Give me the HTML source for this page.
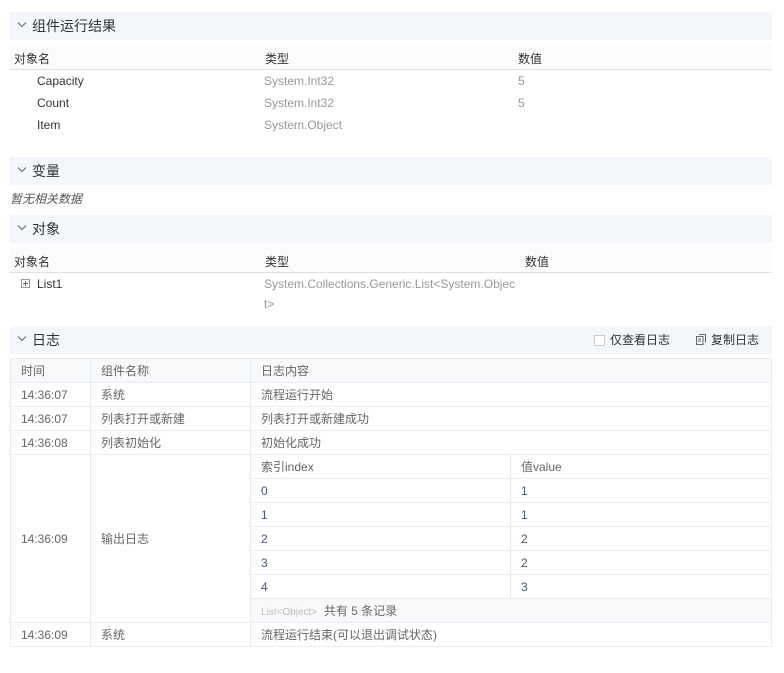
<!DOCTYPE html>
<html><head><meta charset="utf-8"><style>
*{margin:0;padding:0;box-sizing:border-box}
body{width:784px;height:673px;background:#fff;font-family:"Liberation Sans","Noto Sans CJK SC",sans-serif;font-size:12px;color:#333;position:relative;overflow:hidden}
.a{position:absolute;white-space:nowrap}
.hd{position:absolute;left:10px;width:762px;height:28px;background:#f3f6fa;font-size:14px;color:#333;line-height:28px;padding-left:22px}
.hd svg.chev{position:absolute;left:7px;top:10px}
.th{position:absolute;left:10px;width:762px;height:26px;background:#fafbfc;border-bottom:1px solid #dde0e5}
.g{color:#999}
table{position:absolute;border-collapse:collapse;left:10px;top:358px;width:762px;font-size:12px;color:#666}
td{border:1px solid #e8ebf0;height:24px;padding:0 10px;vertical-align:middle}
.lh td{background:#f8f9fa}
.in td{color:#4a5570}
</style></head><body>
<div class="hd" style="top:12px"><svg class="chev" width="10" height="6" viewBox="0 0 10 6"><path d="M1 .5L5 4.5 9 .5" fill="none" stroke="#666" stroke-width="1"/></svg>组件运行结果</div>
<div class="th" style="top:44px"></div>
<div class="a" style="left:14px;top:50px">对象名</div>
<div class="a" style="left:265px;top:50px">类型</div>
<div class="a" style="left:518px;top:50px">数值</div>
<div class="a" style="left:37px;top:74px">Capacity</div><div class="a g" style="left:264px;top:74px">System.Int32</div><div class="a g" style="left:518px;top:74px">5</div>
<div class="a" style="left:37px;top:96px">Count</div><div class="a g" style="left:264px;top:96px">System.Int32</div><div class="a g" style="left:518px;top:96px">5</div>
<div class="a" style="left:37px;top:118px">Item</div><div class="a g" style="left:264px;top:118px">System.Object</div>

<div class="hd" style="top:157px"><svg class="chev" width="10" height="6" viewBox="0 0 10 6"><path d="M1 .5L5 4.5 9 .5" fill="none" stroke="#666" stroke-width="1"/></svg>变量</div>
<div class="a" style="left:10px;top:190px;font-style:italic;color:#555">暂无相关数据</div>

<div class="hd" style="top:215px"><svg class="chev" width="10" height="6" viewBox="0 0 10 6"><path d="M1 .5L5 4.5 9 .5" fill="none" stroke="#666" stroke-width="1"/></svg>对象</div>
<div class="th" style="top:247px"></div>
<div class="a" style="left:14px;top:253px">对象名</div>
<div class="a" style="left:265px;top:253px">类型</div>
<div class="a" style="left:525px;top:253px">数值</div>
<svg class="a" style="left:21px;top:279px" width="9" height="9" viewBox="0 0 9 9"><rect x=".5" y=".5" width="8" height="8" fill="none" stroke="#999"/><path d="M2 4.5h5M4.5 2v5" stroke="#666"/></svg>
<div class="a" style="left:37px;top:277px">List1</div>
<div class="a g" style="left:264px;top:277px">System.Collections.Generic.List&lt;System.Objec</div>
<div class="a g" style="left:264px;top:297px">t&gt;</div>

<div class="hd" style="top:326px"><svg class="chev" width="10" height="6" viewBox="0 0 10 6"><path d="M1 .5L5 4.5 9 .5" fill="none" stroke="#666" stroke-width="1"/></svg>日志
<span class="a" style="left:584px;top:0;font-size:12px"><span style="display:inline-block;width:11px;height:11px;border:1px solid #ccc;background:#fff;vertical-align:-2px;margin-right:5px"></span>仅查看日志</span>
<span class="a" style="left:686px;top:0;font-size:12px"><svg width="10" height="11" viewBox="0 0 10 11" style="vertical-align:-1px;margin-right:5px"><path d="M3 .5h6.5v8M.5 2.5h6.5v8H.5z" fill="none" stroke="#666"/><path d="M2 5h3M2 7h3" stroke="#666"/></svg>复制日志</span></div>

<table>
<tr class="lh"><td style="width:80px">时间</td><td style="width:160px">组件名称</td><td colspan="2">日志内容</td></tr>
<tr><td>14:36:07</td><td>系统</td><td colspan="2">流程运行开始</td></tr>
<tr><td>14:36:07</td><td>列表打开或新建</td><td colspan="2">列表打开或新建成功</td></tr>
<tr><td>14:36:08</td><td>列表初始化</td><td colspan="2">初始化成功</td></tr>
<tr><td rowspan="7">14:36:09</td><td rowspan="7">输出日志</td><td style="width:260px">索引index</td><td>值value</td></tr>
<tr class="in"><td>0</td><td>1</td></tr>
<tr class="in"><td>1</td><td>1</td></tr>
<tr class="in"><td>2</td><td>2</td></tr>
<tr class="in"><td>3</td><td>2</td></tr>
<tr class="in"><td>4</td><td>3</td></tr>
<tr><td colspan="2" style="background:#f8f9fa"><span style="color:#bbb;font-size:10px">List&lt;Object&gt;</span>&nbsp; 共有 5 条记录</td></tr>
<tr><td>14:36:09</td><td>系统</td><td colspan="2">流程运行结束(可以退出调试状态)</td></tr>
</table>
</body></html>
